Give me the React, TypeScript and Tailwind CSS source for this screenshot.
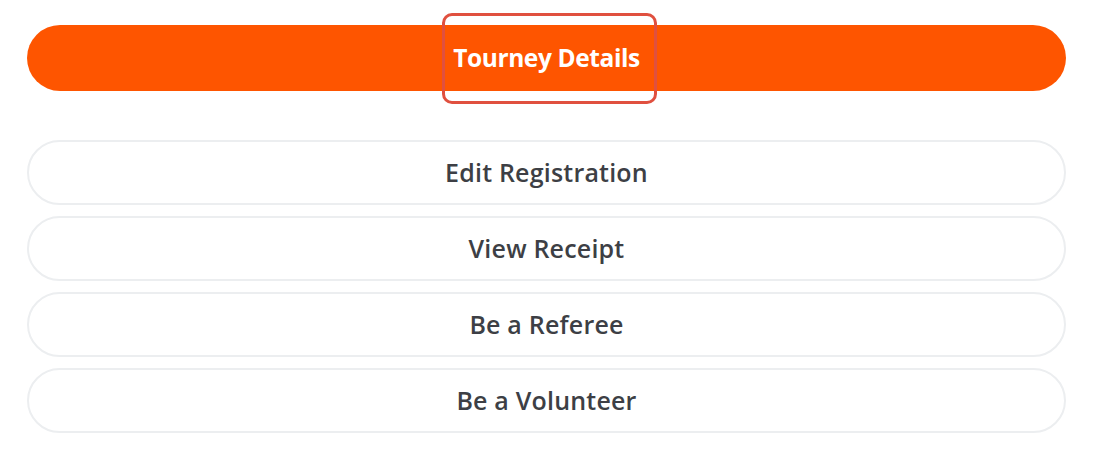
const actions = ['Edit Registration', 'View Receipt', 'Be a Referee', 'Be a Volunteer'];

export default function App() {
    return (
        <div className="relative w-[1107px] h-[458px] bg-white pl-[27px] pr-[41px] pt-[25px] font-['Open_Sans',sans-serif]">
            <button className="w-full h-[66px] rounded-full bg-[#fe5500] text-white text-[24.5px] font-bold tracking-[-0.4px]">
                Tourney Details
            </button>

            <div className="mt-[49px] flex flex-col gap-[11px]">
                {actions.map((label) => (
                    <button
                        key={label}
                        className="w-full h-[65px] rounded-full border-2 border-[#eceef0] bg-white text-[#3d3f45] text-[25px] font-semibold tracking-[0.2px]"
                    >
                        {label}
                    </button>
                ))}
            </div>

            {/* highlight annotation */}
            <div className="absolute left-[442px] top-[13px] w-[215px] h-[91px] rounded-[10px] border-[3px] border-[#e0503f] pointer-events-none" />
        </div>
    );
}
